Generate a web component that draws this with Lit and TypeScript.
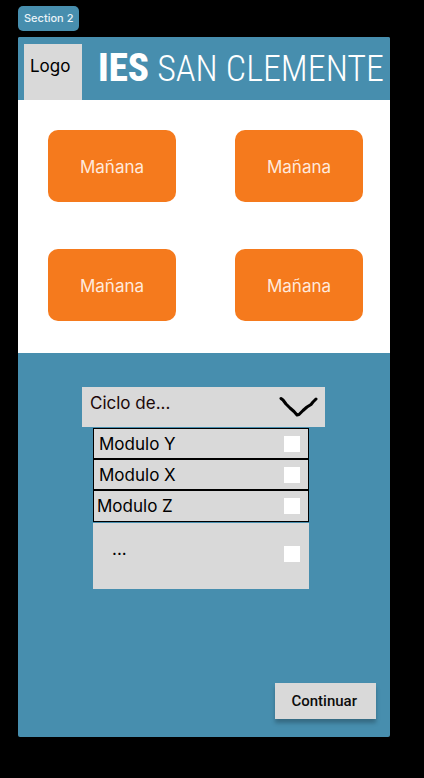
import { LitElement, html, css } from "lit";
import { customElement, property, state } from "lit/decorators.js";
import { classMap } from "lit/directives/class-map.js";

interface Modulo {
  id: string;
  label: string;
  kind: "boxed" | "shifted" | "rest";
}

const MODULOS: Modulo[] = [
  { id: "modulo-y", label: "Modulo Y", kind: "boxed" },
  { id: "modulo-x", label: "Modulo X", kind: "boxed" },
  { id: "modulo-z", label: "Modulo Z", kind: "shifted" },
  { id: "modulo-mas", label: "...", kind: "rest" },
];

@customElement("app-header")
class AppHeader extends LitElement {
  static styles = css`
    :host {
      display: block;
    }
    .bar {
      display: flex;
      align-items: flex-end;
      height: 63px;
      padding: 0 5px 0 6px;
      box-sizing: border-box;
      background: #478eae;
    }
    .logo {
      flex: none;
      width: 58px;
      height: 56px;
      padding: 11px 6px;
      box-sizing: border-box;
      background: #d9d9d9;
      color: #000;
      font-size: 17px;
      line-height: 22px;
    }
    .title {
      flex: 1;
      margin: 0 0 7px 16px;
      color: #fff;
      font-family: "Roboto Condensed", Roboto, sans-serif;
      font-size: 36px;
      font-weight: 300;
      line-height: 48px;
      white-space: nowrap;
    }
    .strong {
      font-size: 39px;
      font-weight: 800;
    }
  `;

  render() {
    return html`
      <header class="bar">
        <div class="logo">Logo</div>
        <h1 class="title"><span class="strong">IES</span> SAN CLEMENTE</h1>
      </header>
    `;
  }
}

@customElement("modulo-list")
class ModuloList extends LitElement {
  @property({ attribute: false }) items: Modulo[] = [];

  static styles = css`
    .list {
      margin: 0;
      padding: 0;
      list-style: none;
    }
    .row {
      display: flex;
      align-items: center;
      justify-content: space-between;
      height: 32px;
      padding: 0 8px 0 5px;
      box-sizing: border-box;
      border: 1px solid #000;
      border-bottom-width: 2px;
      background: #d9d9d9;
      color: #000;
      font-size: 17px;
      line-height: 22px;
    }
    .row + .row {
      height: 31px;
      border-top: 0;
    }
    .row.shifted {
      padding-left: 3px;
      border-bottom-width: 1px;
    }
    .row + .row.rest {
      height: 66px;
      margin-top: 1px;
      padding: 0 9px 4px 19px;
      border: 0;
    }
    .label {
      flex: 1;
    }
    .rest .label {
      padding-bottom: 10px;
    }
    .check {
      appearance: none;
      flex: none;
      width: 16px;
      height: 16px;
      margin: 0;
      border-radius: 0;
      background: #fff;
    }
    .check:checked {
      box-shadow: inset 0 0 0 4px #fff, inset 0 0 0 8px #000;
    }
  `;

  render() {
    return html`
      <ul class="list">
        ${this.items.map(
          (m) => html`
            <li class=${classMap({ row: true, [m.kind]: true })}>
              <label class="label" for=${m.id}>${m.label}</label>
              <input class="check" type="checkbox" id=${m.id} />
            </li>
          `
        )}
      </ul>
    `;
  }
}

@customElement("app-root")
class AppRoot extends LitElement {
  @state() private turnos = ["Mañana", "Mañana", "Mañana", "Mañana"];

  static styles = css`
    :host {
      display: block;
      min-height: 100vh;
      padding: 6px 34px 41px 18px;
      box-sizing: border-box;
      background: #000;
      font-family: Inter, "Liberation Sans", sans-serif;
    }
    .tag {
      display: inline-block;
      margin-bottom: 6px;
      padding: 4px 6px;
      border-radius: 5px;
      background: #478eae;
      color: #e9f3f8;
      font-size: 11px;
      font-weight: 500;
      line-height: 17px;
      vertical-align: top;
    }
    .section {
      border-radius: 2px;
      background: #478eae;
      overflow: hidden;
    }
    .turnos {
      display: grid;
      grid-template-columns: 1fr 1fr;
      gap: 47px 59px;
      padding: 30px 27px 32px 30px;
      background: #fff;
    }
    .turno {
      height: 72px;
      padding: 2px 0 0;
      border: 0;
      border-radius: 10px;
      background: #f57a1d;
      color: #ffe9dc;
      font-family: inherit;
      font-size: 17px;
      font-weight: 400;
      line-height: 22px;
    }
    .form {
      display: flex;
      flex-direction: column;
      padding: 34px 14px 18px 64px;
    }
    .picker {
      display: grid;
      margin-right: 51px;
    }
    .select,
    .chevron {
      grid-area: 1 / 1;
    }
    .select {
      appearance: none;
      width: 100%;
      height: 40px;
      padding: 0 56px 8px 8px;
      border: 0;
      border-radius: 0;
      background: #d9d9d9;
      color: #1c0808;
      font-family: inherit;
      font-size: 17px;
      line-height: 22px;
    }
    .chevron {
      justify-self: end;
      align-self: center;
      width: 40px;
      height: 24px;
      margin-right: 7px;
      pointer-events: none;
    }
    .modulos {
      margin: 1px 67px 94px 11px;
    }
    .next {
      align-self: flex-end;
      height: 36px;
      padding: 0 19px 0 16px;
      border: 0;
      background: #d9d9d9;
      box-shadow: 0 4px 4px rgba(0, 0, 0, 0.25);
      color: #0c0c0c;
      font-family: Roboto, sans-serif;
      font-size: 15px;
      font-weight: 500;
      line-height: 20px;
    }
  `;

  render() {
    return html`
      <div class="tag">Section 2</div>
      <main class="section">
        <app-header></app-header>
        <div class="turnos">
          ${this.turnos.map((t) => html`<button class="turno" type="button">${t}</button>`)}
        </div>
        <form class="form">
          <div class="picker">
            <select class="select" aria-label="Ciclo">
              <option>Ciclo de...</option>
            </select>
            <svg class="chevron" viewBox="0 0 40 24" fill="none" aria-hidden="true">
              <path
                d="M3 3.500L5 5L8 9L12 13L16 16.500L19 20L21 19.500L25 15.500L29 12L33 9.500L35 7L38 4"
                stroke="#000"
                stroke-width="3"
                stroke-linecap="round"
                stroke-linejoin="round"
              />
            </svg>
          </div>
          <modulo-list class="modulos" .items=${MODULOS}></modulo-list>
          <button class="next" type="button">Continuar</button>
        </form>
      </main>
    `;
  }
}
